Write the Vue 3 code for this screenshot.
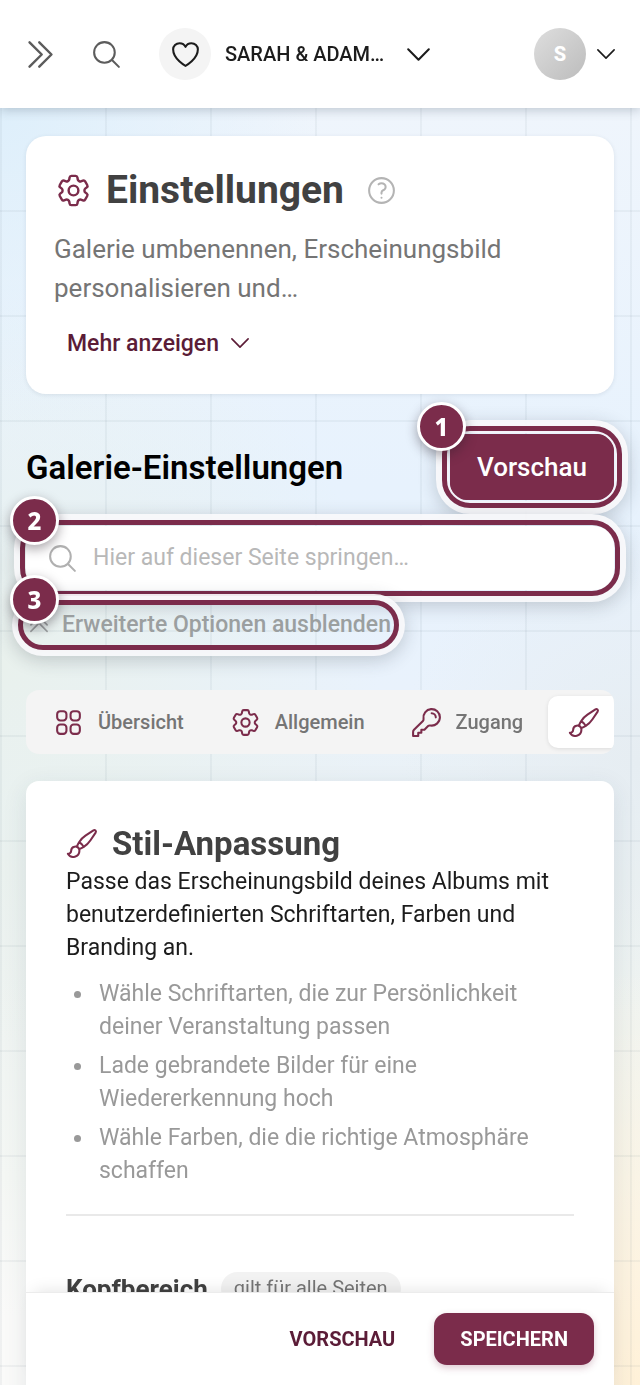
<template>
  <div class="app">
    <header class="topbar">
      <button class="icon-btn" aria-label="Menü öffnen">
        <svg class="icon icon-lg" viewBox="0 0 24 24"><path :d="icons.doubleRight" /></svg>
      </button>
      <button class="icon-btn search-btn" aria-label="Suche">
        <svg class="icon" viewBox="0 0 24 24"><path :d="icons.search" /></svg>
      </button>
      <button class="event-switch">
        <span class="event-icon">
          <svg class="icon" viewBox="0 0 24 24"><path :d="icons.heart" /></svg>
        </span>
        <span class="event-name">SARAH &amp; ADAM…</span>
        <svg class="icon" viewBox="0 0 24 24"><path :d="icons.down" /></svg>
      </button>
      <button class="account" aria-label="Konto">
        <span class="avatar">S</span>
        <svg class="icon icon-sm" viewBox="0 0 24 24"><path :d="icons.down" /></svg>
      </button>
    </header>

    <main class="content">
      <section class="card hero">
        <div class="hero-title">
          <svg class="icon icon-lg accent" viewBox="0 0 24 24"><path :d="icons.cog" /></svg>
          <h1>Einstellungen</h1>
          <button class="icon-btn help" aria-label="Hilfe">
            <svg class="icon" viewBox="0 0 24 24"><path :d="icons.help" /></svg>
          </button>
        </div>
        <p>Galerie umbenennen, Erscheinungsbild personalisieren und…</p>
        <button class="more">
          Mehr anzeigen
          <svg class="icon icon-sm" viewBox="0 0 24 24"><path :d="icons.down" /></svg>
        </button>
      </section>

      <div class="section-head">
        <h2>Galerie-Einstellungen</h2>
        <div class="marked marked-preview">
          <button class="btn preview">Vorschau</button>
          <span class="ring"></span>
          <span class="marker">1</span>
        </div>
      </div>

      <div class="marked marked-search">
        <label class="search">
          <svg class="icon" viewBox="0 0 24 24"><path :d="icons.search" /></svg>
          <input
            v-model="query"
            type="search"
            aria-label="Auf dieser Seite springen"
            placeholder="Hier auf dieser Seite springen…"
          />
        </label>
        <span class="ring"></span>
        <span class="marker">2</span>
      </div>

      <div class="marked marked-advanced">
        <button class="advanced">
          <svg class="icon icon-sm" viewBox="0 0 24 24"><path :d="icons.doubleUp" /></svg>
          Erweiterte Optionen ausblenden
        </button>
        <span class="ring"></span>
        <span class="marker">3</span>
      </div>

      <nav class="tabs">
        <button
          v-for="tab in tabs"
          :key="tab.id"
          :class="['tab', { active: tab.id === activeTab }]"
          :aria-label="tab.title"
          @click="activeTab = tab.id"
        >
          <svg class="icon accent" viewBox="0 0 24 24"><path :d="icons[tab.icon]" /></svg>
          <span v-if="tab.label">{{ tab.label }}</span>
        </button>
      </nav>

      <section class="card panel">
        <div class="panel-title">
          <svg class="icon accent" viewBox="0 0 24 24"><path :d="icons.brush" /></svg>
          <h3>Stil-Anpassung</h3>
        </div>
        <p>
          Passe das Erscheinungsbild deines Albums mit benutzerdefinierten
          Schriftarten, Farben und Branding an.
        </p>
        <ul>
          <li v-for="hint in hints" :key="hint">{{ hint }}</li>
        </ul>
        <hr />
        <div class="sub-head">
          <h4>Kopfbereich</h4>
          <span class="chip">gilt für alle Seiten</span>
        </div>
        <footer class="actions">
          <button class="btn text">VORSCHAU</button>
          <button class="btn save">SPEICHERN</button>
        </footer>
      </section>
    </main>
  </div>
</template>

<script setup>
import { ref } from 'vue'

const icons = {
  doubleRight: 'm5.25 4.5 7.5 7.5-7.5 7.5m6-15 7.5 7.5-7.5 7.5',
  doubleUp: 'm4.5 18.75 7.5-7.5 7.5 7.5m-15-6 7.5-7.5 7.5 7.5',
  down: 'm19.5 8.25-7.5 7.5-7.5-7.5',
  search: 'm21 21-5.197-5.197m0 0A7.5 7.5 0 1 0 5.196 5.196a7.5 7.5 0 0 0 10.607 10.607Z',
  heart: 'M21 8.25c0-2.485-2.099-4.5-4.688-4.5-1.935 0-3.597 1.126-4.312 2.733-.715-1.607-2.377-2.733-4.313-2.733C5.1 3.75 3 5.765 3 8.25c0 7.22 9 12 9 12s9-4.78 9-12Z',
  help: 'M9.879 7.519c1.171-1.025 3.071-1.025 4.242 0 1.172 1.025 1.172 2.687 0 3.712-.203.179-.43.326-.67.442-.745.361-1.45.999-1.45 1.827v.75M21 12a9 9 0 1 1-18 0 9 9 0 0 1 18 0Zm-9 5.25h.008v.008H12v-.008Z',
  cog: 'M9.594 3.94c.09-.542.56-.94 1.11-.94h2.593c.55 0 1.02.398 1.11.94l.213 1.281c.063.374.313.686.645.87.074.04.147.083.22.127.325.196.72.257 1.075.124l1.217-.456a1.125 1.125 0 0 1 1.37.49l1.296 2.247a1.125 1.125 0 0 1-.26 1.431l-1.003.827c-.293.241-.438.613-.43.992a7.723 7.723 0 0 1 0 .255c-.008.378.137.75.43.991l1.004.827c.424.35.534.955.26 1.43l-1.298 2.247a1.125 1.125 0 0 1-1.369.491l-1.217-.456c-.355-.133-.75-.072-1.076.124a6.47 6.47 0 0 1-.22.128c-.331.183-.581.495-.644.869l-.213 1.281c-.09.543-.56.94-1.11.94h-2.594c-.55 0-1.019-.398-1.11-.94l-.213-1.281c-.062-.374-.312-.686-.644-.87a6.52 6.52 0 0 1-.22-.127c-.325-.196-.72-.257-1.076-.124l-1.217.456a1.125 1.125 0 0 1-1.369-.49l-1.297-2.247a1.125 1.125 0 0 1 .26-1.431l1.004-.827c.292-.24.437-.613.43-.991a6.932 6.932 0 0 1 0-.255c.007-.38-.138-.751-.43-.992l-1.004-.827a1.125 1.125 0 0 1-.26-1.43l1.297-2.247a1.125 1.125 0 0 1 1.37-.491l1.216.456c.356.133.751.072 1.076-.124.072-.044.146-.086.22-.128.332-.183.582-.495.644-.869l.214-1.28ZM15 12a3 3 0 1 1-6 0 3 3 0 0 1 6 0Z',
  grid: 'M3.75 6A2.25 2.25 0 0 1 6 3.75h2.25A2.25 2.25 0 0 1 10.5 6v2.25a2.25 2.25 0 0 1-2.25 2.25H6a2.25 2.25 0 0 1-2.25-2.25V6ZM3.75 15.75A2.25 2.25 0 0 1 6 13.5h2.25a2.25 2.25 0 0 1 2.25 2.25V18a2.25 2.25 0 0 1-2.25 2.25H6A2.25 2.25 0 0 1 3.75 18v-2.25ZM13.5 6a2.25 2.25 0 0 1 2.25-2.25H18A2.25 2.25 0 0 1 20.25 6v2.25A2.25 2.25 0 0 1 18 10.5h-2.25a2.25 2.25 0 0 1-2.25-2.25V6ZM13.5 15.75a2.25 2.25 0 0 1 2.25-2.25H18a2.25 2.25 0 0 1 2.25 2.25V18A2.25 2.25 0 0 1 18 20.25h-2.25A2.25 2.25 0 0 1 13.5 18v-2.25Z',
  key: 'M15.75 5.25a3 3 0 0 1 3 3m3 0a6 6 0 0 1-7.029 5.912c-.563-.097-1.159.026-1.563.43L10.5 17.25H8.25v2.25H6v2.25H2.25v-2.818c0-.597.237-1.17.659-1.591l6.499-6.499c.404-.404.527-1 .43-1.563A6 6 0 1 1 21.75 8.25Z',
  brush: 'M9.53 16.122a3 3 0 0 0-5.78 1.128 2.25 2.25 0 0 1-2.4 2.245 4.5 4.5 0 0 0 8.4-2.245c0-.399-.078-.78-.22-1.128Zm0 0a15.998 15.998 0 0 0 3.388-1.62m-5.043-.025a15.994 15.994 0 0 1 1.622-3.395m3.42 3.42a15.995 15.995 0 0 0 4.764-4.648l3.876-5.814a1.151 1.151 0 0 0-1.597-1.597L14.146 6.32a15.996 15.996 0 0 0-4.649 4.763m3.42 3.42a6.776 6.776 0 0 0-3.42-3.42'
}

const tabs = [
  { id: 'overview', title: 'Übersicht', label: 'Übersicht', icon: 'grid' },
  { id: 'general', title: 'Allgemein', label: 'Allgemein', icon: 'cog' },
  { id: 'access', title: 'Zugang', label: 'Zugang', icon: 'key' },
  { id: 'style', title: 'Stil-Anpassung', icon: 'brush' }
]

const hints = [
  'Wähle Schriftarten, die zur Persönlichkeit deiner Veranstaltung passen',
  'Lade gebrandete Bilder für eine Wiedererkennung hoch',
  'Wähle Farben, die die richtige Atmosphäre schaffen'
]

const activeTab = ref('style')
const query = ref('')
</script>

<style>
body {
  margin: 0;
}
</style>

<style scoped>
.app {
  display: flex;
  flex-direction: column;
  height: 100vh;
  overflow: hidden;
  font-family: Roboto, 'Liberation Sans', sans-serif;
  color: #1c1c1c;
  background:
    linear-gradient(90deg, rgba(70, 90, 110, 0.06) 2px, transparent 2px) 0 0 / 105px 105px,
    linear-gradient(rgba(70, 90, 110, 0.06) 2px, transparent 2px) 0 0 / 105px 105px,
    radial-gradient(circle at 100% 100%, #fff1d8 0, rgba(255, 243, 217, 0) 420px),
    radial-gradient(circle at 0 8%, #deeffb 0, rgba(222, 239, 251, 0) 320px),
    radial-gradient(circle at 0 48%, #e9f1ed 0, rgba(233, 241, 237, 0) 380px),
    radial-gradient(circle at 100% 55%, #e6edf2 0, rgba(230, 237, 242, 0) 240px),
    linear-gradient(#eff5fc 8%, #e7f2fd 35%, #e9f2fc 50%, #ebf1f0 63%, #f4f7f4 85%, #fafaf9 95%);
}
*,
*::before,
*::after {
  box-sizing: border-box;
}
h1,
h2,
h3,
h4,
p,
ul {
  margin: 0;
}
button {
  font: inherit;
  color: inherit;
  background: none;
  border: 0;
  padding: 0;
  cursor: pointer;
}
.icon {
  flex: none;
  display: block;
  width: 33px;
  height: 33px;
  fill: none;
  stroke: currentColor;
  stroke-width: 1.5;
  stroke-linecap: round;
  stroke-linejoin: round;
}
.icon-lg {
  width: 39px;
  height: 39px;
}
.icon-sm {
  width: 26px;
  height: 26px;
}
.accent {
  color: #7b2c4b;
}

/* top bar */
.topbar {
  position: relative;
  z-index: 5;
  flex: none;
  display: flex;
  align-items: center;
  height: 108px;
  padding: 0 21px;
  background: #fff;
  box-shadow: 0 2px 10px rgba(40, 60, 80, 0.25);
}
.icon-btn {
  color: #5c5c5c;
}
.search-btn {
  margin: 0 36px 0 30px;
}
.event-switch {
  display: flex;
  align-items: center;
  gap: 14px;
}
.event-icon,
.avatar {
  display: flex;
  align-items: center;
  justify-content: center;
  width: 52px;
  height: 52px;
  border-radius: 50%;
}
.event-icon {
  background: #f4f4f4;
}
.event-name {
  margin-right: 4px;
  font-size: 20px;
  font-weight: 500;
}
.account {
  display: flex;
  align-items: center;
  gap: 7px;
  margin-left: auto;
}
.avatar {
  font-size: 20px;
  font-weight: 800;
  color: #fff;
  background: linear-gradient(135deg, #dedede, #bcbcbc);
}

/* page */
.content {
  flex: 1;
  min-height: 0;
  padding: 28px 26px 0;
  overflow-y: auto;
  scrollbar-width: none;
}
.card {
  background: #fff;
  border-radius: 20px;
  box-shadow: 0 1px 4px rgba(40, 60, 80, 0.1);
}
.hero {
  padding: 30px 28px 33px;
}
.hero-title {
  display: flex;
  align-items: center;
  height: 48px;
  gap: 13px;
}
.hero h1 {
  font-size: 39px;
  font-weight: 700;
  color: #414141;
}
.help {
  margin-left: 8px;
  color: #b4b4b4;
}
.hero p {
  margin-top: 16px;
  font-size: 26px;
  line-height: 39px;
  color: #757575;
}
.more {
  display: flex;
  align-items: center;
  gap: 8px;
  height: 36px;
  margin: 17px 0 0 13px;
  font-size: 23px;
  font-weight: 500;
  color: #5b1c37;
}
.section-head {
  display: flex;
  align-items: center;
  justify-content: space-between;
  margin-top: 40px;
}
.section-head h2 {
  font-size: 33px;
  font-weight: 600;
  color: #000;
}
.btn {
  border-radius: 13px;
  font-size: 20px;
  font-weight: 700;
}
.preview {
  height: 66px;
  padding: 0 27px;
  border-radius: 16px;
  font-size: 26px;
  font-weight: 500;
  color: #fff;
  background: #7b2c4b;
}

/* numbered callouts */
.marked {
  position: relative;
}
.ring {
  position: absolute;
  inset: -6px;
  border: 5px solid #7b2c4b;
  border-radius: 28px;
  box-shadow: 0 0 0 6px rgba(250, 250, 252, 0.92), 0 4px 18px 6px rgba(40, 50, 60, 0.22);
  pointer-events: none;
}
.marked-preview .ring {
  inset: -8px;
  box-shadow: 0 0 0 6px rgba(250, 250, 252, 0.92), inset 0 0 0 2px #f4f4fa, 0 4px 18px 6px rgba(40, 50, 60, 0.22);
}
.marked-advanced .ring {
  inset: -5px -8px;
}
.marker {
  position: absolute;
  z-index: 2;
  top: -30px;
  left: -16px;
  display: flex;
  align-items: center;
  justify-content: center;
  width: 49px;
  height: 49px;
  border: 3px solid #fff;
  border-radius: 50%;
  background: #7b2c4b;
  box-shadow: 0 4px 12px rgba(40, 30, 40, 0.4);
  font-family: 'Noto Sans', sans-serif;
  font-size: 24px;
  font-weight: 800;
  color: #fff;
}
.marked-preview .marker {
  top: -32px;
  left: -33px;
}
.marked-search {
  margin-top: 26px;
}
.search {
  display: flex;
  align-items: center;
  gap: 14px;
  height: 64px;
  padding: 0 20px;
  border-radius: 20px;
  background: #fff;
  color: #b0b0b0;
}
.search input {
  flex: 1;
  min-width: 0;
  padding: 0 0 2px;
  border: 0;
  outline: 0;
  background: none;
  font: inherit;
  font-size: 23px;
  color: #1c1c1c;
}
.search input::placeholder {
  color: #b8b8b8;
}
.marked-advanced {
  width: fit-content;
  margin-top: 15px;
}
.advanced {
  display: flex;
  align-items: center;
  gap: 10px;
  height: 40px;
  padding-bottom: 2px;
  font-size: 23px;
  font-weight: 500;
  color: #9b9fa0;
}

/* tabs */
.tabs {
  display: flex;
  gap: 5px;
  margin-top: 45px;
  padding: 6px;
  border-radius: 13px;
  background: #f4f4f4;
  overflow-x: auto;
  scrollbar-width: none;
}
.tab {
  flex: none;
  display: flex;
  align-items: center;
  gap: 13px;
  height: 52px;
  padding: 0 20px;
  border-radius: 10px;
  font-size: 20px;
  font-weight: 500;
  color: #757575;
}
.tab.active {
  background: #fff;
  box-shadow: 0 1px 4px rgba(0, 0, 0, 0.1);
}

/* style panel */
.panel {
  margin-top: 27px;
  padding: 43px 40px 0;
  border-radius: 13px;
  box-shadow: 0 6px 24px rgba(40, 60, 80, 0.1);
}
.panel-title {
  display: flex;
  align-items: center;
  gap: 13px;
  height: 38px;
}
.panel h3 {
  font-size: 33px;
  font-weight: 700;
  color: #414141;
}
.panel p,
.panel li {
  font-size: 23px;
  line-height: 33px;
}
.panel p {
  margin-top: 3px;
}
.panel ul {
  display: flex;
  flex-direction: column;
  gap: 6px;
  margin-top: 13px;
  padding: 0;
  list-style: none;
  color: #999;
}
.panel li {
  display: flex;
  gap: 18px;
  padding-left: 8px;
}
.panel li::before {
  content: '';
  flex: none;
  width: 7px;
  height: 7px;
  margin-top: 14px;
  border-radius: 50%;
  background: #999;
}
.panel hr {
  height: 2px;
  margin: 27px 0 56px;
  border: 0;
  background: #e9e9e9;
}
.sub-head {
  display: flex;
  align-items: center;
  gap: 13px;
}
.sub-head h4 {
  font-size: 26px;
  font-weight: 700;
  color: #414141;
}
.chip {
  padding: 0 13px;
  border-radius: 17px;
  background: #f2f2f2;
  font-size: 20px;
  line-height: 33px;
  color: #757575;
}
.actions {
  position: sticky;
  bottom: 0;
  display: flex;
  align-items: center;
  justify-content: flex-end;
  gap: 39px;
  margin: 40px -40px 0;
  padding: 20px;
  border-top: 1px solid #ececec;
  background: #fff;
  box-shadow: 0 -8px 16px -8px rgba(0, 0, 0, 0.12);
}
.text {
  color: #5b1c37;
}
.save {
  height: 52px;
  padding: 0 26px;
  color: #fff;
  background: #7b2c4b;
  box-shadow: 0 3px 7px rgba(123, 44, 75, 0.25);
}
</style>
